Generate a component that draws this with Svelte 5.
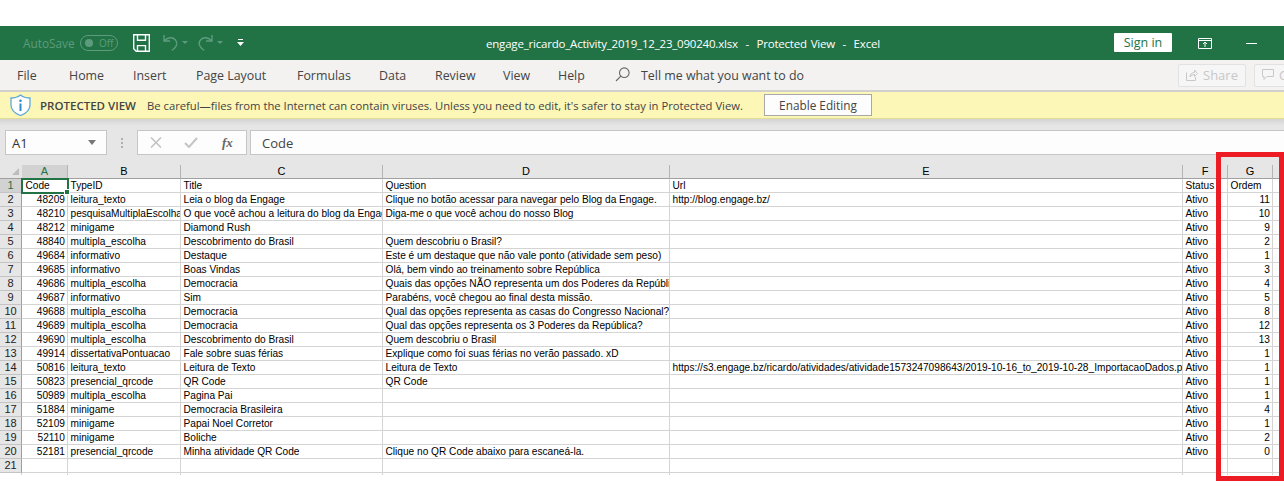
<script>
  const tabs = ['File', 'Home', 'Insert', 'Page Layout', 'Formulas', 'Data', 'Review', 'View', 'Help'];
  const headers = ['A', 'B', 'C', 'D', 'E', 'F', 'G', ''];
  const rows = [
    ['Code', 'TypeID', 'Title', 'Question', 'Url', 'Status', 'Ordem', ''],
    [48209, 'leitura_texto', 'Leia o blog da Engage', 'Clique no botão acessar para navegar pelo Blog da Engage.', 'http://blog.engage.bz/', 'Ativo', 11, ''],
    [48210, 'pesquisaMultiplaEscolha', 'O que você achou a leitura do blog da Engage?', 'Diga-me o que você achou do nosso Blog', '', 'Ativo', 10, ''],
    [48212, 'minigame', 'Diamond Rush', '', '', 'Ativo', 9, ''],
    [48840, 'multipla_escolha', 'Descobrimento do Brasil', 'Quem descobriu o Brasil?', '', 'Ativo', 2, ''],
    [49684, 'informativo', 'Destaque', 'Este é um destaque que não vale ponto (atividade sem peso)', '', 'Ativo', 1, ''],
    [49685, 'informativo', 'Boas Vindas', 'Olá, bem vindo ao treinamento sobre República', '', 'Ativo', 3, ''],
    [49686, 'multipla_escolha', 'Democracia', 'Quais das opções NÃO representa um dos Poderes da República', '', 'Ativo', 4, ''],
    [49687, 'informativo', 'Sim', 'Parabéns, você chegou ao final desta missão.', '', 'Ativo', 5, ''],
    [49688, 'multipla_escolha', 'Democracia', 'Qual das opções representa as casas do Congresso Nacional?', '', 'Ativo', 8, ''],
    [49689, 'multipla_escolha', 'Democracia', 'Qual das opções representa os 3 Poderes da República?', '', 'Ativo', 12, ''],
    [49690, 'multipla_escolha', 'Descobrimento do Brasil', 'Quem descobriu o Brasil', '', 'Ativo', 13, ''],
    [49914, 'dissertativaPontuacao', 'Fale sobre suas férias', 'Explique como foi suas férias no verão passado. xD', '', 'Ativo', 1, ''],
    [50816, 'leitura_texto', 'Leitura de Texto', 'Leitura de Texto', 'https://s3.engage.bz/ricardo/atividades/atividade1573247098643/2019-10-16_to_2019-10-28_ImportacaoDados.pdf', 'Ativo', 1, ''],
    [50823, 'presencial_qrcode', 'QR Code', 'QR Code', '', 'Ativo', 1, ''],
    [50989, 'multipla_escolha', 'Pagina Pai', '', '', 'Ativo', 1, ''],
    [51884, 'minigame', 'Democracia Brasileira', '', '', 'Ativo', 4, ''],
    [52109, 'minigame', 'Papai Noel Corretor', '', '', 'Ativo', 1, ''],
    [52110, 'minigame', 'Boliche', '', '', 'Ativo', 2, ''],
    [52181, 'presencial_qrcode', 'Minha atividade QR Code', 'Clique no QR Code abaixo para escaneá-la.', '', 'Ativo', 0, ''],
    ['', '', '', '', '', '', '', '']
  ];
</script>

<div class="app">
  <div class="topgap"></div>

  <header class="titlebar">
    <span class="autosave">AutoSave</span>
    <span class="toggle"><i></i><b>Off</b></span>
    <svg class="save" width="17" height="18" viewBox="0 0 17 18" fill="none" stroke="#fff" stroke-width="1.4">
      <path d="M.7.7h15.6v16.6H3.2L.7 14.8z" />
      <path d="M4.500.9v5.400h8V.9M4.500 17v-5.400h8V17" />
    </svg>
    <svg class="undo" width="25" height="18" viewBox="0 0 25 18" fill="none" stroke="#5e9b7d" stroke-width="1.4">
      <path d="M1 1v6h6M1.500 6.500C5 3 10 3 12.500 6c2.500 3 1.500 7-3.500 10.500" />
      <path d="M19 7h6l-3 3z" fill="#5e9b7d" stroke="none" />
    </svg>
    <svg class="redo" width="25" height="18" viewBox="0 0 25 18" fill="none" stroke="#5e9b7d" stroke-width="1.4">
      <path d="M14 1v6H8M13.500 6.500C10 3 5 3 2.500 6c-2.500 3-1.500 7 3.500 10.500" />
      <path d="M19 7h6l-3 3z" fill="#5e9b7d" stroke="none" />
    </svg>
    <svg class="customize" width="7" height="8" viewBox="0 0 7 8" fill="#fff">
      <path d="M1 0h5v1H1zM0 3h7L3.500 7z" />
    </svg>
    <h1 class="doc">engage_ricardo_Activity_2019_12_23_090240.xlsx&nbsp; -&nbsp; Protected View&nbsp; -&nbsp; Excel</h1>
    <button class="signin">Sign in</button>
    <svg class="display" width="14" height="11" viewBox="0 0 14 11" fill="none" stroke="#fff">
      <path d="M.5.500h13v10H.5zM.5 2.500h13M7 9V4.500M5 6l2-2 2 2" />
    </svg>
    <span class="minimise"></span>
  </header>

  <nav class="menubar">
    <div class="tabs">
      {#each tabs as t}<span>{t}</span>{/each}
    </div>
    <svg class="lens" width="15" height="15" viewBox="0 0 15 15" fill="none" stroke="#666" stroke-width="1.1">
      <circle cx="9.300" cy="5.700" r="4.800" /><path d="M5.800 9.200 1 14" />
    </svg>
    <span class="tell">Tell me what you want to do</span>
    <span class="share">
      <svg width="12" height="12" viewBox="0 0 12 12" fill="none" stroke="#c8c8c8"><path d="M.5 3.500v8h9V8M4 8c0-3 2-4.500 4.500-4.500V1L11.500 4.500 8.500 7.500V5.500C6.500 5.500 5 6.500 4 8z" /></svg>
      Share
    </span>
    <span class="comments">
      <svg width="12" height="12" viewBox="0 0 12 12" fill="none" stroke="#c8c8c8"><path d="M.5.500h11v7H5l-3 3v-3H.5z" /></svg>
      Comments
    </span>
  </nav>

  <section class="notice">
    <svg class="shield" width="21" height="22" viewBox="0 0 21 22">
      <path d="M10.500 1C8 3 4.500 4 1 4v7c0 5 4 8.500 9.500 10.500C16 19.500 20 16 20 11V4c-3.500 0-7-1-9.500-3z" fill="#fff" stroke="#5ea9d8" stroke-width="1.300" />
      <circle cx="10.500" cy="6.800" r="1.300" fill="#2e8ccb" />
      <rect x="9.500" y="9.500" width="2" height="7.500" fill="#2e8ccb" />
    </svg>
    <strong>PROTECTED VIEW</strong>
    <span class="msg">Be careful—files from the Internet can contain viruses. Unless you need to edit, it's safer to stay in Protected View.</span>
    <button class="enable">Enable Editing</button>
  </section>

  <section class="formula">
    <div class="namebox"><span>A1</span><i></i></div>
    <span class="dots"></span>
    <div class="fxbox">
      <svg width="12" height="11" viewBox="0 0 12 11" fill="none" stroke="#c4c4c4" stroke-width="1.600"><path d="M1 .5 11 10.500M11 .5 1 10.500" /></svg>
      <svg width="14" height="11" viewBox="0 0 14 11" fill="none" stroke="#c4c4c4" stroke-width="2"><path d="M1 6l4 4 8-9" /></svg>
      <span class="fx">fx</span>
    </div>
    <div class="input">Code</div>
  </section>

  <section class="sheet">
    <div class="corner"><i></i></div>
    {#each headers as h, i}
      <div class="colhead" class:sel={i === 0}>{h}</div>
    {/each}
    {#each rows as row, r}
      <div class="rowhead" class:sel={r === 0}>{r + 1}</div>
      {#each row as v, c}
        <div class="cell" class:num={typeof v === 'number'} class:active={r === 0 && c === 0}>{v}</div>
      {/each}
    {/each}
    <div class="tick"></div>
    {#each headers as _}
      <div class="tick"></div>
    {/each}
  </section>

  <div class="redbox"></div>
</div>

<style>
  :global(body) { margin: 0; background: #fff; }
  .app {
    position: relative;
    width: 1284px;
    height: 486px;
    overflow: hidden;
    background: #fff;
    font-family: "Open Sans", "Noto Sans", sans-serif;
  }
  .topgap { height: 26px; }

  .titlebar {
    height: 34px;
    background: #217346;
    display: flex;
    align-items: center;
    color: #fff;
  }
  .titlebar > * { flex: none; }
  .autosave { margin-left: 23px; width: 57px; font-size: 11.800px; color: #5e9b7d; }
  .toggle {
    box-sizing: border-box;
    width: 38px;
    height: 16px;
    border: 1px solid #5e9b7d;
    border-radius: 8px;
    display: flex;
    align-items: center;
    color: #5e9b7d;
    font-size: 10px;
  }
  .toggle i { width: 8px; height: 8px; border-radius: 50%; background: #5e9b7d; margin: 0 6px 0 4px; }
  .toggle b { font-weight: 400; }
  .save { margin-left: 15px; }
  .undo { margin-left: 13px; }
  .redo { margin-left: 10px; }
  .customize { margin-left: 14px; }
  .doc {
    margin: 0 0 0 242px;
    width: 628px;
    font-size: 11.500px;
    letter-spacing: -0.2px;
    word-spacing: 1px;
    font-weight: 400;
    white-space: nowrap;
  }
  .signin {
    margin: -1px 0 0 0;
    width: 58px;
    height: 19px;
    padding: 0;
    border: 0;
    border-radius: 1px;
    background: #fff;
    color: #217346;
    font: 12.500px "Open Sans", sans-serif;
  }
  .display { margin-left: 26px; }
  .minimise { margin-left: 34px; width: 11px; height: 1px; background: #fff; }

  .menubar {
    height: 30px;
    background: #f3f2f1;
    display: flex;
    align-items: center;
    color: #444;
    font-size: 12.400px;
    white-space: nowrap;
  }
  .menubar > * { flex: none; }
  .tabs {
    display: grid;
    grid-template-columns: 52px 64px 63px 101px 82px 56px 68px 55px 57px;
    margin-left: 17px;
    width: 598px;
  }
  .lens { margin-top: -1px; }
  .tell { margin-left: 11px; width: 537px; }
  .share, .comments {
    box-sizing: border-box;
    height: 23px;
    border: 1px solid #e2e2e2;
    border-radius: 2px;
    background: #f6f6f6;
    color: #c8c8c8;
    font-size: 13px;
    display: flex;
    align-items: center;
    gap: 5px;
  }
  .share { width: 68px; padding-left: 7px; }
  .comments { width: 100px; margin-left: 8px; padding-left: 7px; }

  .notice {
    box-sizing: border-box;
    height: 29px;
    border-top: 2px solid #d2d0ce;
    border-bottom: 1px solid #e3dc95;
    background: #fcf6b7;
    display: flex;
    align-items: center;
    color: #444;
    font-size: 11.250px;
    white-space: nowrap;
  }
  .notice > * { flex: none; }
  .shield { margin-left: 10px; }
  .notice strong { margin-left: 9px; font-weight: 600; font-size: 11.500px; width: 107px; }
  .msg { width: 617px; }
  .enable {
    box-sizing: border-box;
    width: 108px;
    height: 22px;
    padding: 0;
    border: 1px solid #a8a8a8;
    background: #fdfdfd;
    color: #444;
    font: 11.800px "Open Sans", sans-serif;
  }

  .formula {
    box-sizing: border-box;
    height: 46px;
    padding-top: 11px;
    background: linear-gradient(#d4d4d4, #e6e6e6 7px);
    display: flex;
    align-items: flex-start;
  }
  .namebox, .fxbox, .input {
    box-sizing: border-box;
    height: 25px;
    border: 1px solid #c6c6c6;
    background: #fdfdfd;
    display: flex;
    align-items: center;
  }
  .namebox {
    width: 102px;
    margin-left: 5px;
    padding: 0 10px 0 6px;
    justify-content: space-between;
    font-size: 13px;
    color: #333;
  }
  .namebox i { border: 4px solid transparent; border-top: 5px solid #777; border-bottom: 0; }
  .dots {
    width: 2px;
    height: 10px;
    margin: 8px 14px 0 14px;
    background: repeating-linear-gradient(#b0b0b0 0 2px, transparent 2px 4px);
  }
  .fxbox { width: 110px; gap: 22px; padding-left: 12px; }
  .fx { font: italic 700 13px "Liberation Serif", serif; color: #666; margin-left: 2px; }
  .input { flex: 1; margin-left: 3px; padding-left: 11px; font-size: 13px; color: #444; border-right: 0; }

  .sheet {
    display: grid;
    grid-template-columns: 22px 46px 113px 202px 287px 513px 45px 45px 11px;
    grid-template-rows: repeat(22, 14px) 2px;
    font-family: "Liberation Sans", Arial, sans-serif;
    font-size: 10.150px;
    color: #000;
  }
  .corner, .colhead {
    box-sizing: border-box;
    background: #e6e6e6;
    border-bottom: 1px solid #a0a0a0;
  }
  .corner { display: flex; justify-content: flex-end; align-items: flex-end; padding: 0 3px 3px 0; }
  .corner i { border-left: 7px solid transparent; border-bottom: 7px solid #bdbdbd; }
  .colhead {
    border-right: 1px solid #b4b4b4;
    text-align: center;
    font-size: 11px;
    line-height: 13px;
  }
  .colhead.sel { background: #d2d2d2; color: #217346; }
  .rowhead {
    box-sizing: border-box;
    background: #e6e6e6;
    border-right: 1px solid #9e9e9e;
    border-bottom: 1px solid #c4c4c4;
    text-align: center;
    font-size: 11px;
    line-height: 13px;
    color: #222;
  }
  .rowhead.sel { background: #d2d2d2; color: #217346; }
  .cell {
    position: relative;
    box-sizing: border-box;
    border-right: 1px solid #d4d4d4;
    border-bottom: 1px solid #d4d4d4;
    padding: 0 2px 0 2.500px;
    line-height: 13px;
    white-space: nowrap;
    overflow: hidden;
  }
  .cell.num { text-align: right; }
  .cell.active {
    overflow: visible;
    outline: 2px solid #217346;
    outline-offset: -1px;
    z-index: 1;
    padding-left: 3.500px;
  }
  .cell.active::after {
    content: "";
    position: absolute;
    right: -3px;
    bottom: -3px;
    box-sizing: content-box;
    width: 4px;
    height: 4px;
    background: #217346;
    border: 1px solid #fff;
  }
  .tick { border-right: 1px solid #d4d4d4; }

  .redbox {
    position: absolute;
    left: 1216px;
    top: 152px;
    width: 68px;
    height: 329px;
    box-sizing: border-box;
    border: 5px solid #ed1c24;
  }
</style>
